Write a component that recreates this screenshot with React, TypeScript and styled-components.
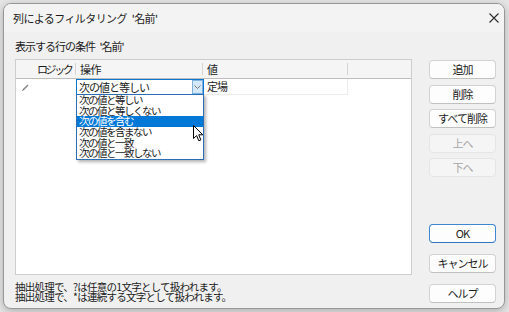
import styled, { createGlobalStyle } from 'styled-components';

const GlobalStyle = createGlobalStyle`
  html, body {
    margin: 0;
    padding: 0;
  }
  body {
    width: 509px;
    height: 312px;
    overflow: hidden;
    font-family: "Noto Sans CJK JP", "Noto Sans", sans-serif;
    font-size: 11px;
    letter-spacing: -1px;
    word-spacing: 3px;
    color: #1b1b1b;
  }
`;

const Desktop = styled.div`
  width: 509px;
  height: 312px;
  box-sizing: border-box;
  padding: 3px 4px 5px 3px;
  background: #e6e6e6;
`;

const Dialog = styled.div`
  height: 100%;
  display: flex;
  flex-direction: column;
  border: 1px solid #979797;
  border-radius: 8px;
  overflow: hidden;
  box-shadow: 0 2px 8px rgba(0, 0, 0, 0.25);
  background: #f0f0f0;
`;

const TitleBar = styled.div`
  height: 27px;
  flex-shrink: 0;
  display: flex;
  align-items: center;
  justify-content: space-between;
  padding: 0 5px 1px 9px;
  background: #f3f3f3;
`;

const Title = styled.span`
  line-height: 14px;
  letter-spacing: -0.6px;
`;

const CloseButton = styled.div`
  width: 10px;
  height: 10px;
  display: flex;
  margin-top: 1px;
`;

const Body = styled.div`
  flex: 1;
  display: flex;
  padding: 0 8px 5px 11px;
`;

const LeftCol = styled.div`
  width: 397px;
  display: flex;
  flex-direction: column;
`;

const Label = styled.div`
  margin-top: 7px;
  line-height: 14px;
  height: 14px;
`;

const Grid = styled.div`
  margin-top: 6px;
  height: 216px;
  box-sizing: border-box;
  border: 1px solid #cdcdcd;
  background: #ffffff;
`;

const HeaderRow = styled.div`
  height: 18px;
  display: flex;
  align-items: center;
  background: #f5f5f5;
  border-bottom: 1px solid #bdbdbd;
`;

const HeaderCell = styled.div<{ w: number; sep?: boolean; tight?: boolean }>`
  width: ${p => p.w}px;
  height: 12px;
  line-height: 12px;
  box-sizing: border-box;
  padding-left: 4px;
  flex-shrink: 0;
  white-space: nowrap;
  letter-spacing: ${p => (p.tight ? '-2.4px' : '-0.5px')};
  border-right: ${p => (p.sep ? '1px solid #d4d4d4' : 'none')};
`;

const DataRow = styled.div`
  height: 16px;
  display: flex;
`;

const RowHead = styled.div`
  width: 17px;
  display: flex;
  align-items: center;
  justify-content: center;
  padding-left: 2px;
  box-sizing: border-box;
`;

const Cell = styled.div<{ w: number; lined?: boolean }>`
  width: ${p => p.w}px;
  flex-shrink: 0;
  box-sizing: border-box;
  line-height: 15px;
  padding-left: 4px;
  border-right: ${p => (p.lined ? '1px solid #ececec' : 'none')};
  border-bottom: ${p => (p.lined ? '1px solid #ececec' : 'none')};
`;

const OpCell = styled.div`
  width: 127px;
  flex-shrink: 0;
  position: relative;
`;

const Combo = styled.div`
  width: 128px;
  height: 16px;
  box-sizing: border-box;
  border: 1px solid #0b74d0;
  background: #ffffff;
  display: flex;
  align-items: stretch;
`;

const ComboText = styled.span`
  flex: 1;
  padding-left: 2px;
  line-height: 14px;
  white-space: nowrap;
`;

const ComboButton = styled.div`
  width: 11px;
  box-sizing: border-box;
  border: 1px solid #7fb2e0;
  background: #d3e8f9;
  display: flex;
  align-items: center;
  justify-content: center;
`;

const DropList = styled.div`
  position: absolute;
  top: 15px;
  left: 0;
  width: 128px;
  box-sizing: border-box;
  border: 1px solid #2d6db4;
  background: #ffffff;
  box-shadow: 2px 2px 3px rgba(0, 0, 0, 0.3);
  z-index: 2;
`;

const DropItem = styled.div<{ selected?: boolean }>`
  height: 10.7px;
  line-height: 10.7px;
  padding-left: 2px;
  font-size: 10.5px;
  letter-spacing: -1.5px;
  white-space: nowrap;
  background: ${p => (p.selected ? '#0078d7' : 'transparent')};
  color: ${p => (p.selected ? '#ffffff' : '#1b1b1b')};
`;

const Cursor = styled.svg`
  position: absolute;
  left: 116px;
  top: 30px;
`;

const Footer = styled.div`
  margin-top: 7px;
  line-height: 10px;
  font-size: 10.5px;
  letter-spacing: -0.75px;
  white-space: nowrap;
`;

const RightCol = styled.div`
  width: 67px;
  margin-left: 17px;
  padding-top: 28px;
  display: flex;
  flex-direction: column;
  justify-content: space-between;
`;

const ButtonGroup = styled.div<{ gap: number }>`
  display: flex;
  flex-direction: column;
  gap: ${p => p.gap}px;
`;

const Button = styled.button<{ primary?: boolean }>`
  height: 19px;
  box-sizing: border-box;
  padding: 0;
  font-family: inherit;
  font-size: 11px;
  letter-spacing: -1px;
  line-height: 17px;
  color: #1b1b1b;
  background: #fdfdfd;
  border: 1px solid ${p => (p.primary ? '#3d86d1' : '#d2d2d2')};
  border-bottom-color: ${p => (p.primary ? '#2f76c2' : '#c0c0c0')};
  border-radius: 4px;

  &:disabled {
    color: #a6a6a6;
    background: #f5f5f5;
    border-color: #e5e5e5;
  }
`;

const ops = [
  '次の値と等しい',
  '次の値と等しくない',
  '次の値を含む',
  '次の値を含まない',
  '次の値と一致',
  '次の値と一致しない',
];

export default function App() {
  return (
    <>
      <GlobalStyle />
      <Desktop>
        <Dialog>
          <TitleBar>
            <Title>列によるフィルタリング '名前'</Title>
            <CloseButton>
              <svg width="10" height="10" viewBox="0 0 10 10">
                <path d="M0.5 0.5 L9.5 9.5 M9.5 0.5 L0.5 9.5" stroke="#2b2b2b" strokeWidth="1.1" />
              </svg>
            </CloseButton>
          </TitleBar>
          <Body>
            <LeftCol>
              <Label>表示する行の条件 '名前'</Label>
              <Grid>
                <HeaderRow>
                  <HeaderCell w={17} />
                  <HeaderCell w={43} sep tight>ロジック</HeaderCell>
                  <HeaderCell w={127} sep>操作</HeaderCell>
                  <HeaderCell w={145} sep>値</HeaderCell>
                </HeaderRow>
                <DataRow>
                  <RowHead>
                    <svg width="7" height="7" viewBox="0 0 7 7">
                      <path d="M1 6 L6 1" stroke="#8a8a8a" strokeWidth="1.6" />
                      <path d="M0.5 6.5 L1.5 5.5" stroke="#555" strokeWidth="1" />
                    </svg>
                  </RowHead>
                  <Cell w={43} />
                  <OpCell>
                    <Combo>
                      <ComboText>次の値と等しい</ComboText>
                      <ComboButton>
                        <svg width="7" height="4" viewBox="0 0 7 4">
                          <path d="M0.5 0.5 L3.5 3.5 L6.5 0.5" fill="none" stroke="#666" strokeWidth="0.9" />
                        </svg>
                      </ComboButton>
                    </Combo>
                    <DropList>
                      {ops.map((op, i) => (
                        <DropItem key={op} selected={i === 2}>{op}</DropItem>
                      ))}
                      <Cursor width="11" height="17" viewBox="0 0 11 17">
                        <path
                          d="M0.5 0.5 L0.5 13.5 L3.6 10.6 L5.8 15.8 L7.9 14.9 L5.7 9.8 L9.8 9.8 Z"
                          fill="#ffffff"
                          stroke="#000000"
                          strokeWidth="1"
                          strokeLinejoin="round"
                        />
                      </Cursor>
                    </DropList>
                  </OpCell>
                  <Cell w={145} lined>定場</Cell>
                </DataRow>
              </Grid>
              <Footer>
                <div>抽出処理で、?は任意の1文字として扱われます。</div>
                <div>抽出処理で、*は連続する文字として扱われます。</div>
              </Footer>
            </LeftCol>
            <RightCol>
              <ButtonGroup gap={5.5}>
                <Button>追加</Button>
                <Button>削除</Button>
                <Button>すべて削除</Button>
                <Button disabled>上へ</Button>
                <Button disabled>下へ</Button>
              </ButtonGroup>
              <ButtonGroup gap={11}>
                <Button primary>OK</Button>
                <Button>キャンセル</Button>
                <Button>ヘルプ</Button>
              </ButtonGroup>
            </RightCol>
          </Body>
        </Dialog>
      </Desktop>
    </>
  );
}
